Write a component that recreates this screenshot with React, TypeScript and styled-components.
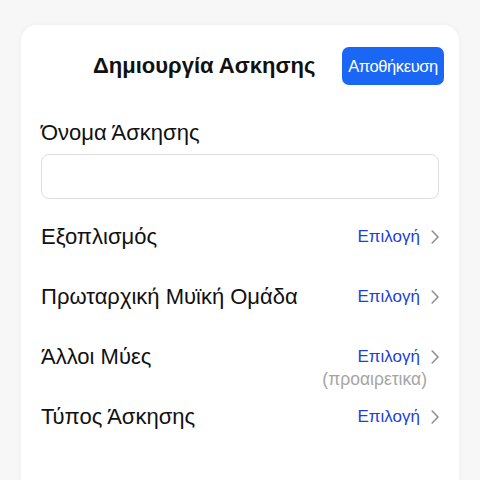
import React from "react";
import styled, { createGlobalStyle } from "styled-components";

const Global = createGlobalStyle`
  html, body { margin: 0; padding: 0; background: #f7f7f7; }
  body { font-family: "Liberation Sans", Arial, sans-serif; color: #111; }
`;

const Page = styled.div`
  width: 480px;
  height: 480px;
  overflow: hidden;
  padding: 25px 21px 0 21px;
  box-sizing: border-box;
`;

const Card = styled.div`
  background: #fff;
  border-radius: 16px 16px 0 0;
  min-height: 470px;
  padding: 22px 20px 0 20px;
  box-shadow: 0 0 6px rgba(0, 0, 0, 0.04);
  box-sizing: border-box;
`;

const Header = styled.div`
  display: flex;
  align-items: center;
  justify-content: space-between;
  height: 38px;
  margin-right: -5px;
`;

const Title = styled.h1`
  margin: 0 0 0 52px;
  font-size: 22px;
  font-weight: 700;
  color: #111;
`;

const SaveButton = styled.button`
  height: 38px;
  width: 102px;
  padding: 0;
  border: none;
  border-radius: 7px;
  background: #1a66f5;
  color: #fff;
  font-family: "Liberation Sans", Arial, sans-serif;
  font-size: 16.5px;
  letter-spacing: -0.4px;
`;

const Label = styled.div`
  margin-top: 36px;
  font-size: 22px;
  line-height: 24px;
  color: #111;
`;

const Input = styled.input`
  display: block;
  margin-top: 9px;
  width: 100%;
  height: 45px;
  box-sizing: border-box;
  border: 1px solid #dcdcdc;
  border-radius: 8px;
  background: #fff;
  outline: none;
`;

const Rows = styled.div`
  margin-top: 8px;
`;

const Row = styled.div`
  display: flex;
  justify-content: space-between;
  align-items: flex-start;
  height: 60px;
  padding-top: 18px;
  box-sizing: border-box;
`;

const RowLabel = styled.div`
  font-size: 22px;
  line-height: 24px;
  color: #111;
`;

const Right = styled.div`
  display: flex;
  flex-direction: column;
  align-items: flex-end;
`;

const Action = styled.div`
  display: flex;
  align-items: center;
  gap: 11px;
  height: 24px;
`;

const ActionText = styled.span`
  font-size: 17px;
  color: #1d3fd9;
`;

const Note = styled.div`
  font-size: 17.5px;
  line-height: 20px;
  color: #a5a5a5;
  margin-right: 12px;
`;

const Chevron = () => (
  <svg width="8" height="14" viewBox="0 0 8 14" fill="none">
    <path d="M1.2 1 L7 7 L1.2 13" stroke="#8e8e93" strokeWidth="1.6" strokeLinecap="round" strokeLinejoin="round" />
  </svg>
);

const rows: { label: string; note?: string }[] = [
  { label: "Εξοπλισμός" },
  { label: "Πρωταρχική Μυϊκή Ομάδα" },
  { label: "Άλλοι Μύες", note: "(προαιρετικα)" },
  { label: "Τύπος Άσκησης" },
];

export default function App() {
  return (
    <>
      <Global />
      <Page>
        <Card>
          <Header>
            <Title>Δημιουργία Ασκησης</Title>
            <SaveButton>Αποθήκευση</SaveButton>
          </Header>
          <Label>Όνομα Άσκησης</Label>
          <Input />
          <Rows>
            {rows.map((r) => (
              <Row key={r.label}>
                <RowLabel>{r.label}</RowLabel>
                <Right>
                  <Action>
                    <ActionText>Επιλογή</ActionText>
                    <Chevron />
                  </Action>
                  {r.note && <Note>{r.note}</Note>}
                </Right>
              </Row>
            ))}
          </Rows>
        </Card>
      </Page>
    </>
  );
}
